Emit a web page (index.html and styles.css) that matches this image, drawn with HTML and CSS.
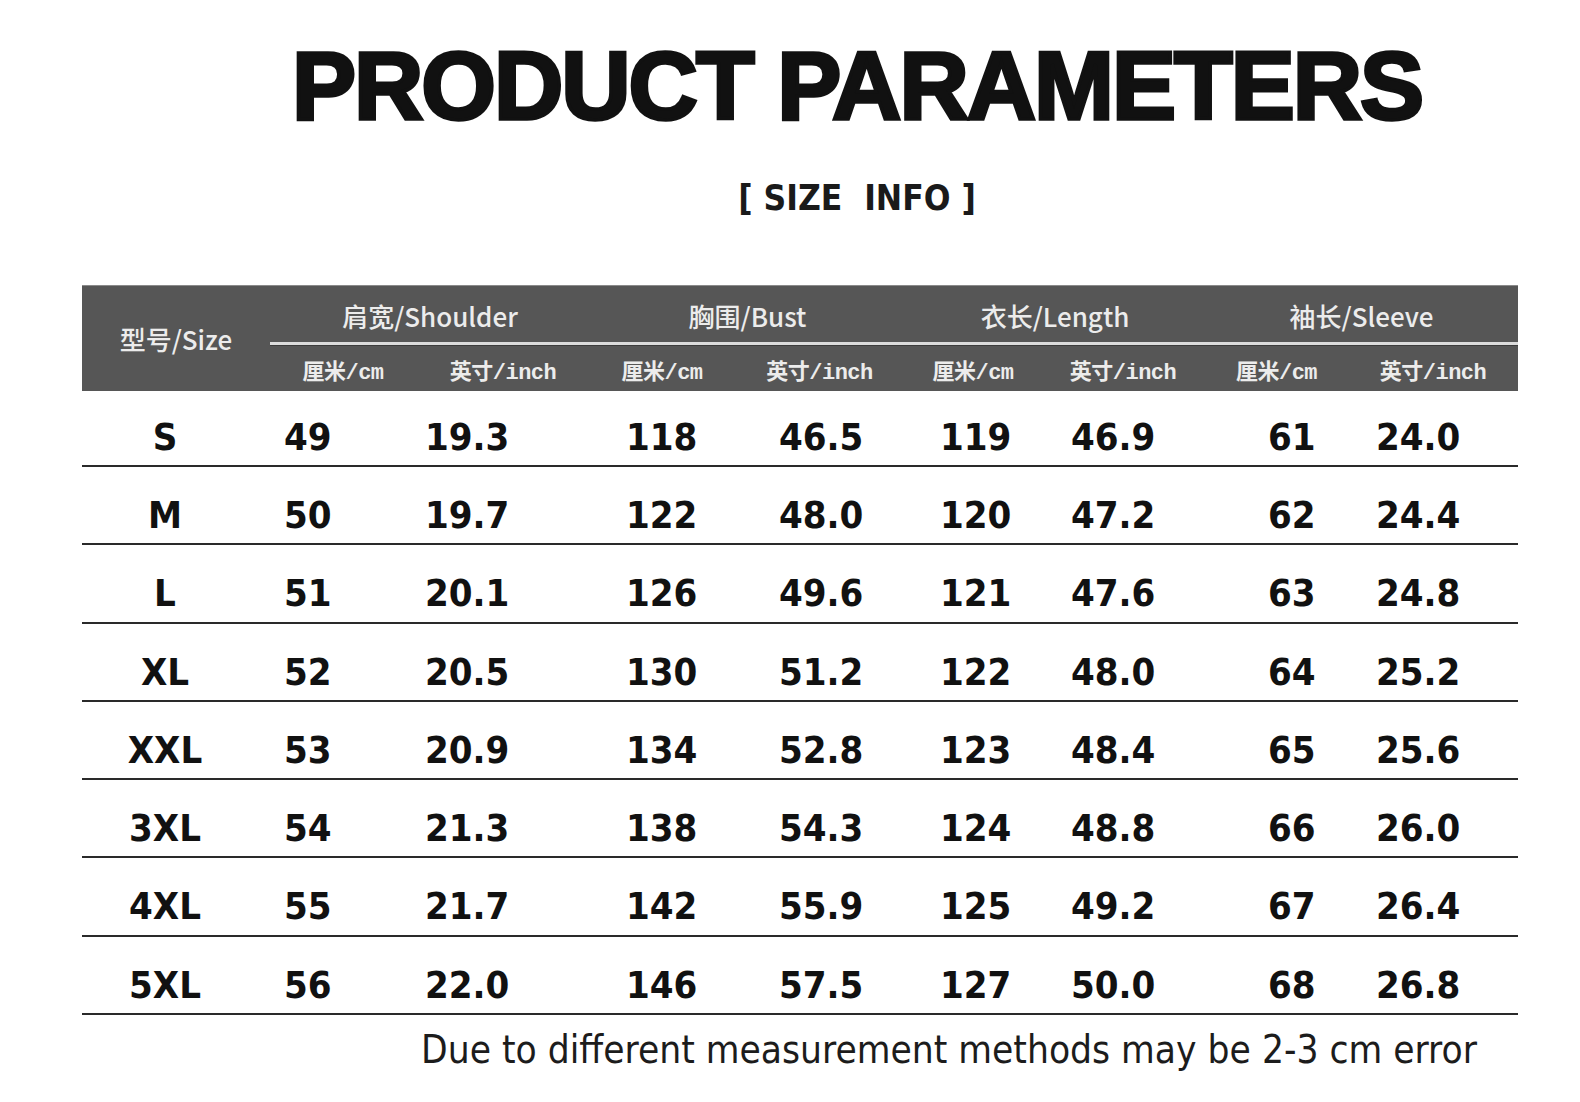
FILE: index.html
```html
<!DOCTYPE html>
<html>
<head>
<meta charset="utf-8">
<link rel="stylesheet" href="styles.css">
</head>
<body>
<div class="page">
  <header class="heading">
    <h1 class="title">PRODUCT PARAMETERS</h1>
    <div class="subtitle">[ SIZE&nbsp; INFO ]</div>
  </header>

  <section class="table">
    <div class="thead">
      <div class="th-size">型号/Size</div>
      <div class="th-group">肩宽/Shoulder</div>
      <div class="th-group">胸围/Bust</div>
      <div class="th-group">衣长/Length</div>
      <div class="th-group">袖长/Sleeve</div>
      <div class="th-unit">厘米/cm</div>
      <div class="th-unit">英寸/inch</div>
      <div class="th-unit">厘米/cm</div>
      <div class="th-unit">英寸/inch</div>
      <div class="th-unit">厘米/cm</div>
      <div class="th-unit">英寸/inch</div>
      <div class="th-unit">厘米/cm</div>
      <div class="th-unit">英寸/inch</div>
    </div>

    <div class="row first"><div class="size">S</div><div class="num">49</div><div class="num">19.3</div><div class="num">118</div><div class="num">46.5</div><div class="num">119</div><div class="num">46.9</div><div class="num">61</div><div class="num">24.0</div></div>
    <div class="row"><div class="size">M</div><div class="num">50</div><div class="num">19.7</div><div class="num">122</div><div class="num">48.0</div><div class="num">120</div><div class="num">47.2</div><div class="num">62</div><div class="num">24.4</div></div>
    <div class="row"><div class="size">L</div><div class="num">51</div><div class="num">20.1</div><div class="num">126</div><div class="num">49.6</div><div class="num">121</div><div class="num">47.6</div><div class="num">63</div><div class="num">24.8</div></div>
    <div class="row"><div class="size">XL</div><div class="num">52</div><div class="num">20.5</div><div class="num">130</div><div class="num">51.2</div><div class="num">122</div><div class="num">48.0</div><div class="num">64</div><div class="num">25.2</div></div>
    <div class="row"><div class="size">XXL</div><div class="num">53</div><div class="num">20.9</div><div class="num">134</div><div class="num">52.8</div><div class="num">123</div><div class="num">48.4</div><div class="num">65</div><div class="num">25.6</div></div>
    <div class="row"><div class="size">3XL</div><div class="num">54</div><div class="num">21.3</div><div class="num">138</div><div class="num">54.3</div><div class="num">124</div><div class="num">48.8</div><div class="num">66</div><div class="num">26.0</div></div>
    <div class="row"><div class="size">4XL</div><div class="num">55</div><div class="num">21.7</div><div class="num">142</div><div class="num">55.9</div><div class="num">125</div><div class="num">49.2</div><div class="num">67</div><div class="num">26.4</div></div>
    <div class="row"><div class="size">5XL</div><div class="num">56</div><div class="num">22.0</div><div class="num">146</div><div class="num">57.5</div><div class="num">127</div><div class="num">50.0</div><div class="num">68</div><div class="num">26.8</div></div>
  </section>

  <p class="note">Due to different measurement methods may be 2-3 cm error</p>
</div>
</body>
</html>
```

FILE: styles.css
```css
html, body {
  margin: 0;
  padding: 0;
  background: #ffffff;
}

.page {
  width: 1580px;
  height: 1102px;
  overflow: hidden;
  color: #111;
}

.heading {
  margin-left: 134px;
  display: flex;
  flex-direction: column;
  align-items: center;
  padding-top: 31px;
}

.title {
  margin: 0;
  font-family: "Liberation Sans", Arial, sans-serif;
  font-weight: 700;
  font-size: 96px;
  line-height: 110px;
  letter-spacing: -2px;
  -webkit-text-stroke: 3.5px #111;
  color: #111;
  white-space: nowrap;
}

.subtitle {
  margin-top: 37px;
  font-family: "DejaVu Sans Condensed", "DejaVu Sans", sans-serif;
  font-stretch: condensed;
  font-weight: 700;
  font-size: 35px;
  line-height: 40px;
  color: #1a1a1a;
  white-space: nowrap;
}

.table {
  margin: 0 62px 0 82px;
  margin-top: 67px;
  width: 1436px;
}

.thead {
  display: grid;
  grid-template-columns: 188px 160px 160px 158px 157px 150px 150px 157px 156px;
  grid-template-rows: 59px 47px;
  background: #565656;
  color: #ececec;
  border-top: 1px solid #8a8a8a;
  box-sizing: border-box;
  height: 106px;
}

.th-size {
  grid-row: 1 / span 2;
  grid-column: 1;
  display: flex;
  align-items: center;
  justify-content: center;
  font-family: "Noto Sans CJK SC", "Noto Sans", sans-serif;
  font-weight: 500;
  font-size: 26px;
  padding-bottom: 2px;
}

.th-group {
  grid-column: span 2;
  display: flex;
  align-items: center;
  justify-content: center;
  font-family: "Noto Sans CJK SC", "Noto Sans", sans-serif;
  font-weight: 500;
  font-size: 26px;
  border-bottom: 3px solid #dcdcdc;
  box-shadow: 0 1px 0 #3c3c3c;
  padding-top: 2px;
  box-sizing: border-box;
}

.th-unit {
  display: flex;
  align-items: center;
  justify-content: center;
  padding-right: 14px;
  padding-top: 2px;
  font-family: "Liberation Mono", "Noto Sans CJK SC", monospace;
  font-weight: 700;
  font-size: 22px;
  letter-spacing: -0.5px;
  white-space: nowrap;
}

.row {
  display: grid;
  grid-template-columns: 166px 177px 201px 153px 161px 131px 197px 108px 1fr;
  height: 78.3px;
  box-sizing: border-box;
  border-bottom: 2px solid #2a2a2a;
  padding-top: 26px;
  font-family: "DejaVu Sans Condensed", "DejaVu Sans", sans-serif;
  font-stretch: condensed;
  font-weight: 700;
  font-size: 38px;
  line-height: 44px;
  color: #111;
}

.row.first {
  height: 76px;
  padding-top: 24px;
}

.size {
  text-align: center;
}

.num {
  text-align: left;
}

.row .num:nth-child(2) {
  padding-left: 36px;
}

.note {
  margin: 12px 0 0 421px;
  font-family: "DejaVu Sans Condensed", "DejaVu Sans", sans-serif;
  font-stretch: condensed;
  font-size: 38.5px;
  line-height: 46px;
  color: #1c1c1c;
  white-space: nowrap;
}
```
